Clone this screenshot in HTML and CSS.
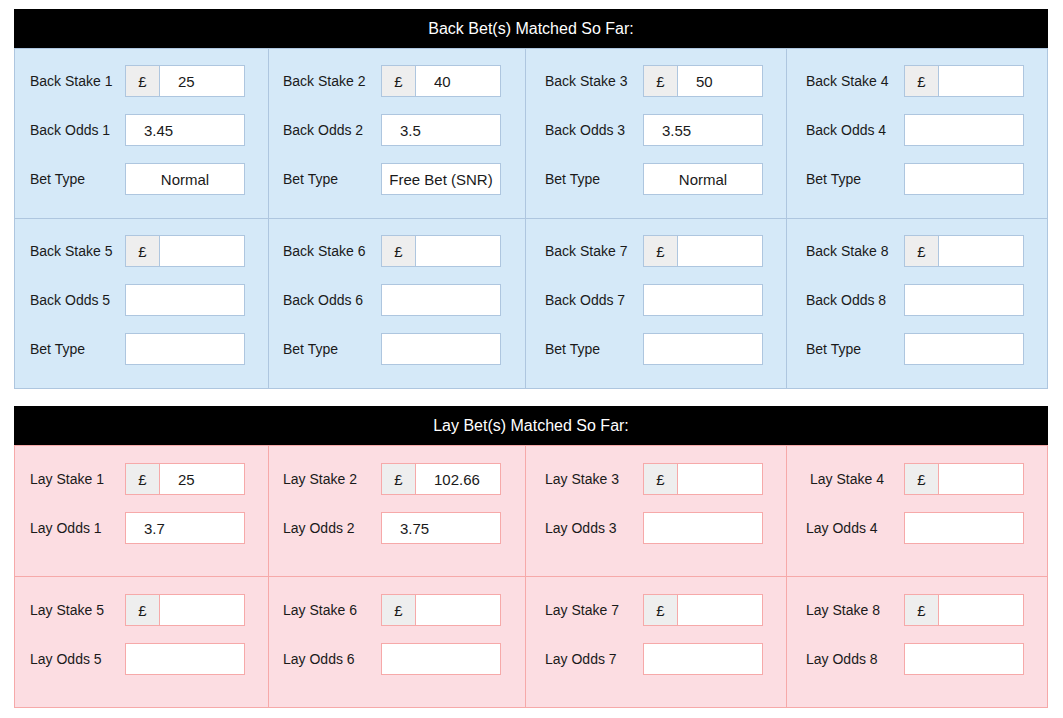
FILE: index.html
```html
<!DOCTYPE html>
<html lang="en">
  <head>
    <meta charset="UTF-8" />
    <meta name="viewport" content="width=device-width, initial-scale=1.0" />
    <title>Matched Bets</title>
    <link rel="stylesheet" href="styles.css">
  </head>
  <body>
    <div class="page">
      <!-- Back bets -->
      <section class="bets back">
        <h2 class="bets-title">Back Bet(s) Matched So Far:</h2>
        <div class="bets-grid">
          <div class="bet-cell">
            <div class="bet-row">
              <label>Back Stake 1</label>
              <div class="field money"><span class="addon">£</span><input type="text" value="25"></div>
            </div>
            <div class="bet-row">
              <label>Back Odds 1</label>
              <input class="field" type="text" value="3.45">
            </div>
            <div class="bet-row">
              <label>Bet Type</label>
              <input class="field centered" type="text" value="Normal">
            </div>
          </div>
          <div class="bet-cell">
            <div class="bet-row">
              <label>Back Stake 2</label>
              <div class="field money"><span class="addon">£</span><input type="text" value="40"></div>
            </div>
            <div class="bet-row">
              <label>Back Odds 2</label>
              <input class="field" type="text" value="3.5">
            </div>
            <div class="bet-row">
              <label>Bet Type</label>
              <input class="field centered" type="text" value="Free Bet (SNR)">
            </div>
          </div>
          <div class="bet-cell">
            <div class="bet-row">
              <label>Back Stake 3</label>
              <div class="field money"><span class="addon">£</span><input type="text" value="50"></div>
            </div>
            <div class="bet-row">
              <label>Back Odds 3</label>
              <input class="field" type="text" value="3.55">
            </div>
            <div class="bet-row">
              <label>Bet Type</label>
              <input class="field centered" type="text" value="Normal">
            </div>
          </div>
          <div class="bet-cell">
            <div class="bet-row">
              <label>Back Stake 4</label>
              <div class="field money"><span class="addon">£</span><input type="text"></div>
            </div>
            <div class="bet-row">
              <label>Back Odds 4</label>
              <input class="field" type="text">
            </div>
            <div class="bet-row">
              <label>Bet Type</label>
              <input class="field centered" type="text">
            </div>
          </div>

          <div class="bet-cell">
            <div class="bet-row">
              <label>Back Stake 5</label>
              <div class="field money"><span class="addon">£</span><input type="text"></div>
            </div>
            <div class="bet-row">
              <label>Back Odds 5</label>
              <input class="field" type="text">
            </div>
            <div class="bet-row">
              <label>Bet Type</label>
              <input class="field centered" type="text">
            </div>
          </div>
          <div class="bet-cell">
            <div class="bet-row">
              <label>Back Stake 6</label>
              <div class="field money"><span class="addon">£</span><input type="text"></div>
            </div>
            <div class="bet-row">
              <label>Back Odds 6</label>
              <input class="field" type="text">
            </div>
            <div class="bet-row">
              <label>Bet Type</label>
              <input class="field centered" type="text">
            </div>
          </div>
          <div class="bet-cell">
            <div class="bet-row">
              <label>Back Stake 7</label>
              <div class="field money"><span class="addon">£</span><input type="text"></div>
            </div>
            <div class="bet-row">
              <label>Back Odds 7</label>
              <input class="field" type="text">
            </div>
            <div class="bet-row">
              <label>Bet Type</label>
              <input class="field centered" type="text">
            </div>
          </div>
          <div class="bet-cell">
            <div class="bet-row">
              <label>Back Stake 8</label>
              <div class="field money"><span class="addon">£</span><input type="text"></div>
            </div>
            <div class="bet-row">
              <label>Back Odds 8</label>
              <input class="field" type="text">
            </div>
            <div class="bet-row">
              <label>Bet Type</label>
              <input class="field centered" type="text">
            </div>
          </div>
        </div>
      </section>

      <!-- Lay bets -->
      <section class="bets lay">
        <h2 class="bets-title">Lay Bet(s) Matched So Far:</h2>
        <div class="bets-grid">
          <div class="bet-cell">
            <div class="bet-row">
              <label>Lay Stake 1</label>
              <div class="field money"><span class="addon">£</span><input type="text" value="25"></div>
            </div>
            <div class="bet-row">
              <label>Lay Odds 1</label>
              <input class="field" type="text" value="3.7">
            </div>
          </div>
          <div class="bet-cell">
            <div class="bet-row">
              <label>Lay Stake 2</label>
              <div class="field money"><span class="addon">£</span><input type="text" value="102.66"></div>
            </div>
            <div class="bet-row">
              <label>Lay Odds 2</label>
              <input class="field" type="text" value="3.75">
            </div>
          </div>
          <div class="bet-cell">
            <div class="bet-row">
              <label>Lay Stake 3</label>
              <div class="field money"><span class="addon">£</span><input type="text"></div>
            </div>
            <div class="bet-row">
              <label>Lay Odds 3</label>
              <input class="field" type="text">
            </div>
          </div>
          <div class="bet-cell">
            <div class="bet-row">
              <label class="indent">Lay Stake 4</label>
              <div class="field money"><span class="addon">£</span><input type="text"></div>
            </div>
            <div class="bet-row">
              <label>Lay Odds 4</label>
              <input class="field" type="text">
            </div>
          </div>

          <div class="bet-cell">
            <div class="bet-row">
              <label>Lay Stake 5</label>
              <div class="field money"><span class="addon">£</span><input type="text"></div>
            </div>
            <div class="bet-row">
              <label>Lay Odds 5</label>
              <input class="field" type="text">
            </div>
          </div>
          <div class="bet-cell">
            <div class="bet-row">
              <label>Lay Stake 6</label>
              <div class="field money"><span class="addon">£</span><input type="text"></div>
            </div>
            <div class="bet-row">
              <label>Lay Odds 6</label>
              <input class="field" type="text">
            </div>
          </div>
          <div class="bet-cell">
            <div class="bet-row">
              <label>Lay Stake 7</label>
              <div class="field money"><span class="addon">£</span><input type="text"></div>
            </div>
            <div class="bet-row">
              <label>Lay Odds 7</label>
              <input class="field" type="text">
            </div>
          </div>
          <div class="bet-cell">
            <div class="bet-row">
              <label>Lay Stake 8</label>
              <div class="field money"><span class="addon">£</span><input type="text"></div>
            </div>
            <div class="bet-row">
              <label>Lay Odds 8</label>
              <input class="field" type="text">
            </div>
          </div>
        </div>
      </section>
    </div>
  </body>
</html>
```

FILE: styles.css
```css
body {
  margin: 0;
  font-family: "Liberation Sans", Arial, sans-serif;
  font-size: 14px;
  color: #1a1a1a;
  background-color: white;
}

.page {
  width: 1034px;
  margin: 9px 14px;
}

.bets {
  margin-bottom: 17px;
}

.bets-title {
  margin: 0;
  height: 39px;
  line-height: 40px;
  background: black;
  color: white;
  font-size: 16px;
  font-weight: normal;
  text-align: center;
}

.bets-grid {
  display: grid;
  grid-template-columns: 253fr 256fr 260fr 260fr;
  gap: 1px;
}

.bet-cell {
  display: flex;
  flex-direction: column;
  gap: 17px;
  padding: 16px 23px 23px 15px;
}

.bet-cell:nth-child(4n + 2) {
  padding-left: 14px;
  padding-right: 24px;
}

.bet-cell:nth-child(4n + 3),
.bet-cell:nth-child(4n + 4) {
  padding-left: 19px;
}

.bet-row {
  display: flex;
  align-items: center;
  justify-content: space-between;
  height: 32px;
}

.bet-row label.indent {
  padding-left: 4px;
}

.field {
  box-sizing: border-box;
  width: 120px;
  height: 32px;
  margin: 0;
  padding: 0 0 0 18px;
  background: white;
  border: 1px solid;
  font-family: inherit;
  font-size: 15px;
  color: #1a1a1a;
  outline: none;
}

.field.centered {
  padding: 0;
  text-align: center;
}

.money {
  display: flex;
  padding: 0;
}

.money .addon {
  width: 33px;
  display: flex;
  align-items: center;
  justify-content: center;
  background: #eeeeee;
  border-right: 1px solid;
  border-color: inherit;
}

.money input {
  flex: 1;
  min-width: 0;
  margin: 0;
  padding: 0 0 0 18px;
  border: none;
  background: white;
  font-family: inherit;
  font-size: 15px;
  color: #1a1a1a;
  outline: none;
}

/* back (blue) theme */
.back .bets-grid {
  background: #aec6df;
  border: 1px solid #aec6df;
}

.back .bet-cell {
  background: #d5e9f8;
}

.back .field {
  border-color: #aec6df;
}

/* lay (pink) theme */
.lay .bets-grid {
  background: #f6a9a9;
  border: 1px solid #f6a9a9;
}

.lay .bet-cell {
  background: #fcdde2;
  padding-top: 17px;
  padding-bottom: 32px;
}

.lay .field {
  border-color: #f6a9a9;
}
```
